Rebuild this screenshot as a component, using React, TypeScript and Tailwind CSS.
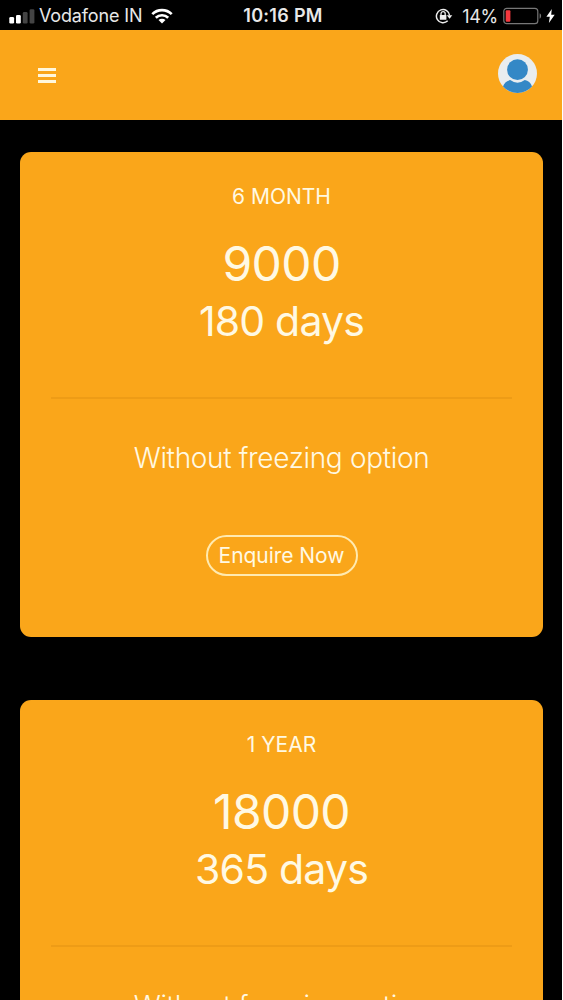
const plans = [
  { name: "6 MONTH", price: "9000", days: "180 days", note: "Without freezing option" },
  { name: "1 YEAR", price: "18000", days: "365 days", note: "Without freezing option" },
];

function StatusBar() {
  return (
    <div className="grid h-[30px] shrink-0 grid-cols-[1fr_auto_1fr] items-center bg-black pr-[7px] pl-[9px] text-[#e8e8e8]">
      <div className="flex items-center">
        <svg width="26" height="16" viewBox="0 0 26 16" className="mt-[2px] fill-white">
          <rect x="0.3" y="8" width="4.8" height="6.6" rx="1.3" />
          <rect x="7" y="6" width="4.8" height="8.6" rx="1.3" />
          <rect x="13.8" y="3" width="4.8" height="11.6" rx="1.3" fill="#444" />
          <rect x="20.6" y="0.2" width="4.8" height="14.4" rx="1.3" fill="#444" />
        </svg>
        <span className="ml-[4px] pt-px text-[18px] leading-[30px] tracking-[-0.15px] whitespace-nowrap">
          Vodafone IN
        </span>
        <svg width="22" height="16" viewBox="0 0 22 16" className="ml-[9px]" fill="none" stroke="#fff" strokeWidth="2.7">
          <path d="M1.3 6.1a13.8 13.8 0 0 1 19.4 0" />
          <path d="M4.8 9.8a8.8 8.8 0 0 1 12.4 0" />
          <path d="M11 15.5l-3.5-3.4a5 5 0 0 1 7 0z" fill="#fff" stroke="none" />
        </svg>
      </div>
      <span className="pl-[2px] text-[18px] font-semibold tracking-[0.3px] whitespace-nowrap">10:16 PM</span>
      <div className="flex items-center justify-end">
        <svg width="18" height="16" viewBox="0 0 18 16" fill="none" stroke="#eee" strokeWidth="1.5">
          <path d="M12.7 12.8A6.6 6.6 0 1 1 14.6 7.5" />
          <path d="M11.8 7.2h5.5l-2.7 3.6z" fill="#eee" stroke="none" />
          <rect x="4.8" y="7" width="6.6" height="4.8" rx="0.6" fill="#eee" stroke="none" />
          <path d="M6 7.3V5.8a2.1 2.1 0 0 1 4.2 0v1.5" strokeWidth="1.3" />
        </svg>
        <span className="ml-[9px] pt-px text-[18px] tracking-[-0.3px]">14%</span>
        <svg width="40" height="18" viewBox="0 0 40 18" className="ml-[5px]">
          <rect x="0.8" y="1.3" width="34" height="15.4" rx="3" fill="none" stroke="#777" strokeWidth="1.2" />
          <rect x="2.7" y="3.3" width="4.7" height="11.4" rx="1" fill="#f5383e" />
          <path d="M36.6 6.3c2 .8 2 4.6 0 5.4z" fill="#777" />
        </svg>
        <svg width="9" height="14" viewBox="0 0 9 14" className="ml-[3px]">
          <path d="M5.8 0L0.4 7.7h3.4L2.9 14l5.8-8.2H5.2z" fill="#fff" />
        </svg>
      </div>
    </div>
  );
}

function Header() {
  return (
    <header className="flex h-[90px] shrink-0 items-center justify-between bg-[#faa61a] pr-[25px] pl-[38px]">
      <button aria-label="Menu" className="flex w-[18px] flex-col gap-[3px]">
        <span className="h-[3px] bg-[#fff7dc]" />
        <span className="h-[3px] bg-[#fff7dc]" />
        <span className="h-[3px] bg-[#fff7dc]" />
      </button>
      <svg width="39" height="39" viewBox="0 0 39 39" className="mb-[3px]">
        <circle cx="19.5" cy="19.5" r="19.5" fill="#e9edef" />
        <path
          d="M5 32.5C6 29 9 26.6 12.2 26.1Q19.5 31.4 26.8 26.1C30 26.6 33 29 34 32.5A19.5 19.5 0 0 1 5 32.5z"
          fill="#3488c6"
        />
        <circle cx="19.5" cy="15.7" r="10.4" fill="#3488c6" />
      </svg>
    </header>
  );
}

function PlanCard({ plan }: { plan: (typeof plans)[number] }) {
  return (
    <section className="flex h-[485px] shrink-0 flex-col items-center rounded-[11px] bg-[#faa61a] px-[31px] pt-[30px] text-[#fff9e3]">
      <h2 className="text-[21px] leading-[30px]">{plan.name}</h2>
      <p className="mt-[22px] text-[48px] leading-[60px] tracking-[-0.6px]">{plan.price}</p>
      <p className="text-[41px] leading-[55px] tracking-[-0.8px]">{plan.days}</p>
      <hr className="mt-[48px] w-full border-t-2 border-[#ee9c16]" />
      <p className="mt-[39px] text-[28px] leading-[40px] font-light tracking-[-0.34px] whitespace-nowrap">{plan.note}</p>
      <button className="mt-[57px] h-[41px] w-[152px] rounded-full border-2 border-[#ffeab0] text-[21px] leading-[37px] tracking-[-0.05px] whitespace-nowrap">
        Enquire Now
      </button>
    </section>
  );
}

export default function App() {
  return (
    <div className="h-[1000px] overflow-hidden bg-white font-['Inter',sans-serif]">
      <div className="flex h-full w-[562px] flex-col bg-black">
        <StatusBar />
        <Header />
        <main className="flex min-h-0 flex-1 flex-col gap-[63px] overflow-hidden pt-[32px] pr-[19px] pl-[20px]">
          {plans.map((plan) => (
            <PlanCard key={plan.name} plan={plan} />
          ))}
        </main>
      </div>
    </div>
  );
}
